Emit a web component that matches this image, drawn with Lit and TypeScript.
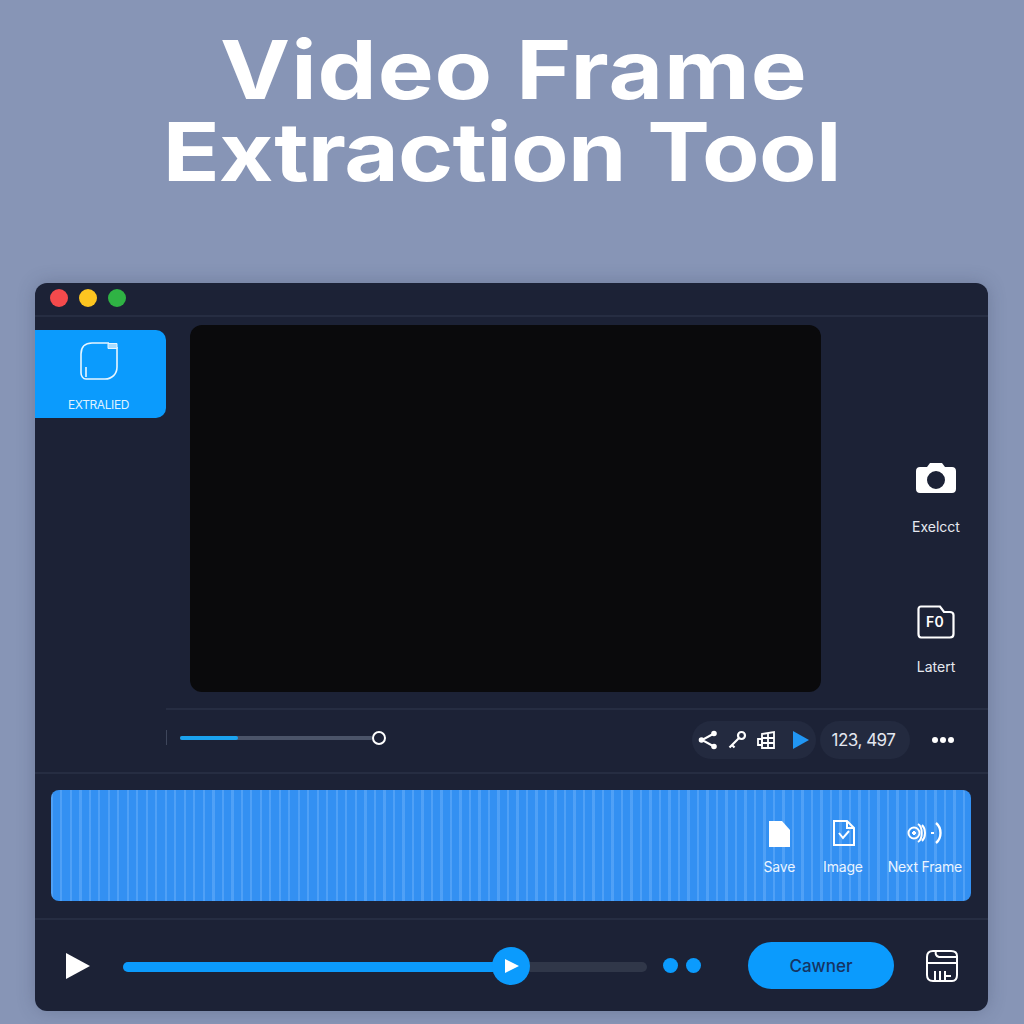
import { LitElement, html, css } from "lit";
import { customElement } from "lit/decorators.js";

@customElement("app-root")
export class AppRoot extends LitElement {
  static styles = css`
    :host { display: block; width: 1024px; height: 1024px; overflow: hidden; background: #8795b6; font-family: "Inter", "Liberation Sans", sans-serif; color: #fff; }
    * { box-sizing: border-box; }
    svg { display: block; }
    .page { display: flex; flex-direction: column; height: 1024px; padding: 29px 36px 13px 35px; }
    h1 { margin: 0 0 95px; height: 159px; font-size: 81px; line-height: 82px; font-weight: 700; text-align: center; white-space: nowrap; padding-left: 4px; transform: scaleX(1.16); }
    h1 span { display: block; }
    h1 .a { letter-spacing: .8px; }
    h1 .b { letter-spacing: -.6px; padding-right: 21px; }
    .win { flex: 1; display: flex; flex-direction: column; background: #1c2236; border-radius: 12px; overflow: hidden; box-shadow: 0 0 18px rgba(50, 60, 90, .28); }
    .bar { height: 34px; flex: none; display: flex; align-items: center; gap: 11px; padding: 0 0 2px 15px; border-bottom: 2px solid #262d42; }
    .dot { width: 18px; height: 18px; border-radius: 50%; }
    .main { height: 391px; flex: none; display: flex; }
    .side { width: 155px; flex: none; padding-top: 13px; }
    .tab { width: 131px; height: 88px; background: #0b9bfd; border-radius: 0 10px 10px 0; display: flex; flex-direction: column; align-items: center; padding-top: 11px; padding-right: 4px; }
    .tab span { margin-top: 17px; font-size: 12px; line-height: 14px; letter-spacing: -.4px; color: #dff2ff; }
    .video { width: 631px; height: 367px; margin-top: 8px; background: #0a0a0c; border-radius: 12px; flex: none; }
    .rail { flex: 1; display: flex; flex-direction: column; align-items: center; padding: 145px 0 0 63px; }
    .rail div { display: flex; flex-direction: column; align-items: center; font-size: 14px; line-height: 18px; color: #e6e9f0; }
    .rail .shot { height: 143px; gap: 24px; }
    .rail .late { gap: 19px; }
    .fo { position: relative; }
    .fo b { position: absolute; left: 9px; top: 9px; font-size: 14px; line-height: 16px; font-weight: 600; color: #fff; letter-spacing: .4px; }
    .ctrl { height: 64px; flex: none; margin-left: 131px; display: flex; align-items: center; border-top: 2px solid #262d42; padding-right: 33px; padding-bottom: 3px; }
    .tick { width: 1px; height: 15px; background: #3e465b; margin: 0 13px 4px 0; }
    .seek { width: 193px; height: 4px; margin-bottom: 4px; background: #4b5469; border-radius: 2px; flex: none; }
    .seek i { display: block; width: 58px; height: 4px; background: #1ba3ef; border-radius: 2px; }
    .ring { width: 14px; height: 14px; border: 2px solid #fff; border-radius: 50%; margin: 0 0 4px -1px; flex: none; background: #1c2236; }
    .tools { margin-left: 306px; height: 38px; width: 124px; flex: none; background: #232a3f; border-radius: 19px; display: flex; align-items: center; padding-left: 6px; gap: 9px; }
    .count { width: 90px; height: 38px; flex: none; margin-left: 4px; padding-right: 3px; background: #232a3f; border-radius: 19px; display: flex; align-items: center; justify-content: center; font-size: 17px; letter-spacing: -.5px; color: #e3e7f0; }
    .more { display: flex; gap: 2px; margin-left: 22px; }
    .more i { width: 6px; height: 6px; background: #fff; border-radius: 50%; }
    .sep { height: 148px; flex: none; border-top: 2px solid #262d42; border-bottom: 2px solid #262d42; padding: 16px 17px 0 16px; }
    .strip { height: 111px; border-radius: 8px; background-color: #3390f2; background-image: repeating-linear-gradient(90deg, rgba(140, 195, 255, .32) 0 2px, transparent 2px 9.5px); display: flex; justify-content: flex-end; gap: 25px; padding: 28px 9px 0 0; }
    .act { display: flex; flex-direction: column; align-items: center; gap: 10px; font-size: 14px; line-height: 18px; letter-spacing: -.2px; color: #eaf4ff; white-space: nowrap; }
    .act.save { margin-right: 3px; }
    .act svg { height: 30px; }
    .act .doc { margin-left: 3px; }
    .player { flex: 1; display: flex; align-items: center; padding: 0 0 0 31px; }
    .track { width: 524px; height: 10px; margin: 2px 0 0 33px; background: #303749; border-radius: 5px; flex: none; position: relative; }
    .fill { width: 388px; height: 10px; background: #0b9bfd; border-radius: 5px; }
    .knob { position: absolute; left: 369px; top: -15px; width: 38px; height: 38px; border-radius: 50%; background: #0b9bfd; display: flex; align-items: center; justify-content: center; }
    .blue { width: 15px; height: 15px; border-radius: 50%; background: #0b9bfd; flex: none; margin-left: 8px; }
    .blue.first { margin-left: 16px; }
    .cta { width: 146px; height: 47px; margin-left: 47px; border-radius: 24px; background: #0b9bfd; color: #153463; font-size: 17px; font-weight: 500; display: flex; align-items: center; justify-content: center; flex: none; }
    .print { margin-left: 30px; flex: none; }
  `;

  render() {
    return html`<div class="page">
      <h1><span class="a">Video Frame</span><span class="b">Extraction Tool</span></h1>
      <div class="win">
        <div class="bar">
          <span class="dot" style="background:#f44a4c"></span>
          <span class="dot" style="background:#fdc520"></span>
          <span class="dot" style="background:#2fb344"></span>
        </div>
        <div class="main">
          <div class="side">
            <div class="tab">
              <svg width="40" height="40" viewBox="0 0 40 40" fill="none" stroke="#e8f6ff" stroke-width="1.6">
                <path d="M30 2H13C6 2 2 6 2 13V32C2 35 4 38 7 38H26C33 38 38 33 38 26V6" />
                <path d="M29 2.500H38V7.500H29Z" fill="#a8dcff" stroke-width="1" />
                <path d="M7 26V36" />
              </svg>
              <span>EXTRALIED</span>
            </div>
          </div>
          <div class="video"></div>
          <div class="rail">
            <div class="shot">
              <svg width="40" height="32" viewBox="0 0 40 32">
                <path fill="#fff" fill-rule="evenodd" d="M14 1H26L29 5H36C38.500 5 40 6.500 40 9V27C40 29.500 38.500 31 36 31H4C1.500 31 0 29.500 0 27V9C0 6.500 1.500 5 4 5H11ZM20 9A9 9 0 1 0 20 27A9 9 0 1 0 20 9Z" />
              </svg>
              Exelcct
            </div>
            <div class="late">
              <span class="fo">
                <svg width="38" height="34" viewBox="0 0 38 34" fill="none" stroke="#fff" stroke-width="2.200">
                  <path d="M4 1.500H23L27 7H33C35 7 36.500 8.500 36.500 10V29C36.500 31 35 32.500 33 32.500H4C2.500 32.500 1.500 31 1.500 29V4C1.500 2.500 2.500 1.500 4 1.500Z" />
                </svg>
                <b>F0</b>
              </span>
              Latert
            </div>
          </div>
        </div>
        <div class="ctrl">
          <span class="tick"></span>
          <div class="seek"><i></i></div>
          <span class="ring"></span>
          <div class="tools">
            <svg width="20" height="20" viewBox="0 0 20 20" fill="none" stroke="#fff" stroke-width="2">
              <path d="M16 3.500 4 10 16 16.500" />
              <circle cx="16" cy="3.500" r="1.800" fill="#fff" />
              <circle cx="3.500" cy="10" r="1.800" fill="#fff" />
              <circle cx="16" cy="16.500" r="1.800" fill="#fff" />
            </svg>
            <svg width="20" height="20" viewBox="0 0 20 20" fill="none" stroke="#fff" stroke-width="2.200">
              <circle cx="14.500" cy="5.500" r="3.500" />
              <path d="M12 8 2.500 17.500M5 15l2.500 2.500" />
            </svg>
            <svg width="20" height="20" viewBox="0 0 20 20" fill="none" stroke="#fff" stroke-width="1.800">
              <path d="M6 4 18 2V18H6ZM6 8H18M6 13H18M12 3V18" />
              <path d="M2 9H6V15H2Z" />
            </svg>
            <svg width="16" height="18" viewBox="0 0 16 18" style="margin-left:8px"><path fill="#2196f3" d="M0 0 16 9 0 18Z" /></svg>
          </div>
          <div class="count">123, 497</div>
          <div class="more"><i></i><i></i><i></i></div>
        </div>
        <div class="sep">
          <div class="strip">
            <div class="act save">
              <svg width="23" height="30" viewBox="0 0 23 30"><path fill="#fff" d="M1 3H14L22 12V29H1Z" /></svg>
              Save
            </div>
            <div class="act">
              <svg class="doc" width="24" height="30" viewBox="0 0 24 30" fill="none" stroke="#fff" stroke-width="2">
                <path d="M2 3H15L22 10V27H2Z" />
                <path d="M15 3V10H22" />
                <path d="M7 15 11 20 17 13" />
              </svg>
              Image
            </div>
            <div class="act">
              <svg width="36" height="30" viewBox="0 0 36 30" fill="none" stroke="#fff" stroke-width="2">
                <circle cx="7" cy="15" r="5.500" />
                <path d="M5 15h4M7 13v4" />
                <path d="M11 6C16 9 16 21 11 24M15 7C19 11 19 19 15 23" />
                <path d="M24 15H27" />
                <path d="M29 5C35 10 35 20 29 25" stroke-width="2.400" />
              </svg>
              Next Frame
            </div>
          </div>
        </div>
        <div class="player">
          <svg width="24" height="26" viewBox="0 0 24 26"><path fill="#fff" d="M0 0 24 13 0 26Z" /></svg>
          <div class="track">
            <div class="fill"></div>
            <div class="knob">
              <svg width="14" height="14" viewBox="0 0 14 14" style="margin-left:2px"><path fill="#fff" d="M0 0 14 7 0 14Z" /></svg>
            </div>
          </div>
          <span class="blue first"></span>
          <span class="blue"></span>
          <div class="cta">Cawner</div>
          <svg class="print" width="34" height="34" viewBox="0 0 34 34" fill="none" stroke="#fff" stroke-width="2">
            <path d="M3 8C3 4 5 2 9 2H27C31 2 33 3 33 7V26C33 30 31 32 28 32H9C5 32 3 30 3 26Z" />
            <path d="M3 14H33M12 2C11 5 12 7 15 8H33" />
            <path d="M11 32V22M16 32V22M21 32V22M21 27H27" />
          </svg>
        </div>
      </div>
    </div>`;
  }
}
